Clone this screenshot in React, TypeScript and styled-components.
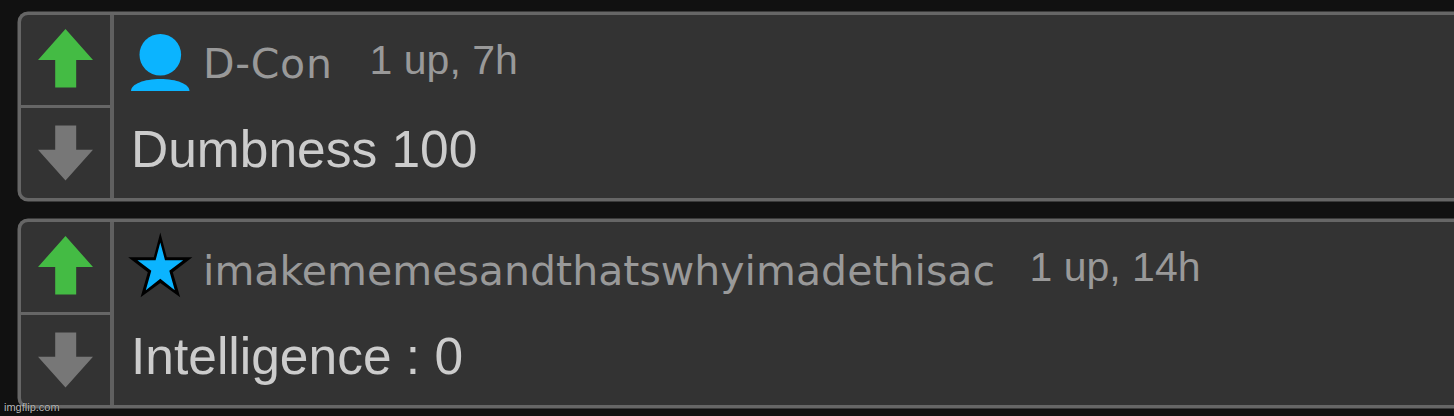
import styled, { createGlobalStyle } from "styled-components";

const GlobalStyle = createGlobalStyle`
  * {
    box-sizing: border-box;
  }
  body {
    margin: 0;
    background: #111;
    overflow: hidden;
  }
`;

const Page = styled.main`
  width: 1454px;
  height: 416px;
  padding: 12px 0 0 18px;
  overflow: hidden;
  background: #111;
  font-family: "Liberation Sans", Arial, sans-serif;
`;

const List = styled.div`
  display: flex;
  flex-direction: column;
  gap: 18px;
`;

const Comment = styled.article`
  display: flex;
  height: 189px;
  background: #333;
  border: 3px solid #666;
  border-right: 0;
  border-radius: 10px 0 0 10px;
  box-shadow: 0 0 0 0.5px #666;
`;

const Votes = styled.div`
  display: flex;
  flex-direction: column;
  width: 93px;
  border-right: 4px solid #606060;
`;

const VoteButton = styled.div<{ $down?: boolean }>`
  display: flex;
  justify-content: center;
  height: ${(p) => (p.$down ? "93px" : "90px")};
  padding-top: ${(p) => (p.$down ? "17px" : "14px")};
  border-top: ${(p) => (p.$down ? "3px solid #666" : "0")};
  color: ${(p) => (p.$down ? "#777" : "#4b4")};

  svg {
    display: block;
  }
`;

const Body = styled.div`
  padding: 15px 0 0 14px;
`;

const Meta = styled.header`
  display: flex;
  height: 72px;
`;

const UserIcon = styled.svg`
  display: block;
  flex: none;
  width: 64px;
  height: 68px;
  overflow: visible;
`;

const UserName = styled.span<{ $spacing: number }>`
  margin-left: 11px;
  font-family: "DejaVu Sans", Verdana, sans-serif;
  font-size: 41px;
  line-height: 48px;
  padding-top: 10px;
  letter-spacing: ${(p) => p.$spacing}px;
  color: #999;
`;

const Stats = styled.span<{ $gap: number }>`
  margin-left: ${(p) => p.$gap}px;
  padding-top: 6px;
  font-size: 41px;
  line-height: 48px;
  color: #999;
`;

const Text = styled.p`
  margin: 0;
  padding: 17px 0 0 3px;
  font-size: 51.5px;
  line-height: 60px;
  white-space: nowrap;
  color: #ccc;
`;

const Watermark = styled.div`
  position: absolute;
  left: 4px;
  top: 401px;
  font-size: 11px;
  line-height: 13px;
  color: #bbb;
  text-shadow: 0 0 1px #000;
`;

type CommentData = {
  user: string;
  icon: "person" | "star";
  spacing: number;
  gap: number;
  stats: string;
  text: string;
};

const comments: CommentData[] = [
  { user: "D-Con", icon: "person", spacing: 0.7, gap: 37, stats: "1 up, 7h", text: "Dumbness 100" },
  {
    user: "imakememesandthatswhyimadethisac",
    icon: "star",
    spacing: 0.02,
    gap: 34.5,
    stats: "1 up, 14h",
    text: "Intelligence : 0",
  },
];

const Arrow = ({ down }: { down?: boolean }) => (
  <svg width="55" height="60" viewBox="0 0 55 60" fill="currentColor">
    <path d={down ? "M17.2 .5H38.2V24.8H55L27.5 55.5L0 24.8H17.2Z" : "M27.5 0L55 31H38.2V58.6H17.2V31H0Z"} />
  </svg>
);

const Icon = ({ type }: { type: CommentData["icon"] }) => (
  <UserIcon viewBox="128 30 64 68">
    {type === "person" ? (
      <g fill="#0bb4ff">
        <circle cx="160.3" cy="54.8" r="20.8" />
        <path d="M131 91C131 84 144 79 160.3 79S189.5 84 189.5 91Z" />
      </g>
    ) : (
      <>
        <path d="M160.3 25.5L166.8 50.2H192.4L172.8 65.3L180.2 90.2L160.3 76L140.6 90.2L147.8 65.3L128.2 50.2H153.8Z" />
        <path
          fill="#0bb4ff"
          d="M160.3 35.5L165 53.2H183.2L169.3 63.8L174.8 83.2L160.3 71.8L145.8 83.2L151.3 63.8L137.4 53.2H155.6Z"
        />
      </>
    )}
  </UserIcon>
);

export default function App() {
  return (
    <Page>
      <GlobalStyle />
      <List>
        {comments.map((c) => (
          <Comment key={c.user}>
            <Votes>
              <VoteButton>
                <Arrow />
              </VoteButton>
              <VoteButton $down>
                <Arrow down />
              </VoteButton>
            </Votes>
            <Body>
              <Meta>
                <Icon type={c.icon} />
                <UserName $spacing={c.spacing}>{c.user}</UserName>
                <Stats $gap={c.gap}>{c.stats}</Stats>
              </Meta>
              <Text>{c.text}</Text>
            </Body>
          </Comment>
        ))}
      </List>
      <Watermark>imgflip.com</Watermark>
    </Page>
  );
}
